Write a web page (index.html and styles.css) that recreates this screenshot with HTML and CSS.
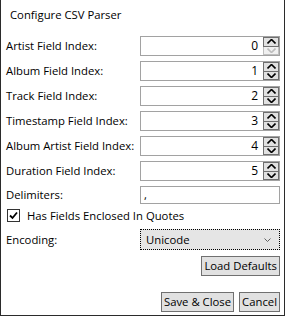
FILE: index.html
```html
<!DOCTYPE html>
<html>
<head>
<meta charset="utf-8">
<link rel="stylesheet" href="styles.css">
</head>
<body>
<div class="window">
  <div class="title">Configure CSV Parser</div>
  <div class="form">
    <div class="row"><span class="label">Artist Field Index:</span>
      <div class="spin"><span class="val">0</span>
        <div class="spinbtns">
          <span class="sb"><svg width="9" height="5" viewBox="0 0 9 5"><path d="M0.5 4.5 L4.5 0.5 L8.5 4.5" fill="none" stroke="#000" stroke-width="1.6"/></svg></span>
          <span class="sb disabled"><svg width="9" height="5" viewBox="0 0 9 5"><path d="M0.5 0.5 L4.5 4.5 L8.5 0.5" fill="none" stroke="#bdbdbd" stroke-width="1.6"/></svg></span>
        </div>
      </div>
    </div>
    <div class="row"><span class="label">Album Field Index:</span>
      <div class="spin"><span class="val">1</span>
        <div class="spinbtns">
          <span class="sb"><svg width="9" height="5" viewBox="0 0 9 5"><path d="M0.5 4.5 L4.5 0.5 L8.5 4.5" fill="none" stroke="#000" stroke-width="1.6"/></svg></span>
          <span class="sb"><svg width="9" height="5" viewBox="0 0 9 5"><path d="M0.5 0.5 L4.5 4.5 L8.5 0.5" fill="none" stroke="#000" stroke-width="1.6"/></svg></span>
        </div>
      </div>
    </div>
    <div class="row"><span class="label">Track Field Index:</span>
      <div class="spin"><span class="val">2</span>
        <div class="spinbtns">
          <span class="sb"><svg width="9" height="5" viewBox="0 0 9 5"><path d="M0.5 4.5 L4.5 0.5 L8.5 4.5" fill="none" stroke="#000" stroke-width="1.6"/></svg></span>
          <span class="sb"><svg width="9" height="5" viewBox="0 0 9 5"><path d="M0.5 0.5 L4.5 4.5 L8.5 0.5" fill="none" stroke="#000" stroke-width="1.6"/></svg></span>
        </div>
      </div>
    </div>
    <div class="row"><span class="label">Timestamp Field Index:</span>
      <div class="spin"><span class="val">3</span>
        <div class="spinbtns">
          <span class="sb"><svg width="9" height="5" viewBox="0 0 9 5"><path d="M0.5 4.5 L4.5 0.5 L8.5 4.5" fill="none" stroke="#000" stroke-width="1.6"/></svg></span>
          <span class="sb"><svg width="9" height="5" viewBox="0 0 9 5"><path d="M0.5 0.5 L4.5 4.5 L8.5 0.5" fill="none" stroke="#000" stroke-width="1.6"/></svg></span>
        </div>
      </div>
    </div>
    <div class="row"><span class="label">Album Artist Field Index:</span>
      <div class="spin"><span class="val">4</span>
        <div class="spinbtns">
          <span class="sb"><svg width="9" height="5" viewBox="0 0 9 5"><path d="M0.5 4.5 L4.5 0.5 L8.5 4.5" fill="none" stroke="#000" stroke-width="1.6"/></svg></span>
          <span class="sb"><svg width="9" height="5" viewBox="0 0 9 5"><path d="M0.5 0.5 L4.5 4.5 L8.5 0.5" fill="none" stroke="#000" stroke-width="1.6"/></svg></span>
        </div>
      </div>
    </div>
    <div class="row"><span class="label">Duration Field Index:</span>
      <div class="spin"><span class="val">5</span>
        <div class="spinbtns">
          <span class="sb"><svg width="9" height="5" viewBox="0 0 9 5"><path d="M0.5 4.5 L4.5 0.5 L8.5 4.5" fill="none" stroke="#000" stroke-width="1.6"/></svg></span>
          <span class="sb"><svg width="9" height="5" viewBox="0 0 9 5"><path d="M0.5 0.5 L4.5 4.5 L8.5 0.5" fill="none" stroke="#000" stroke-width="1.6"/></svg></span>
        </div>
      </div>
    </div>
    <div class="row delim"><span class="label">Delimiters:</span>
      <div class="textbox">,</div>
    </div>
    <div class="check-row">
      <span class="checkbox"><svg width="11" height="11" viewBox="0 0 11 11"><path d="M2 5.5 L4.5 8 L9 2.5" fill="none" stroke="#000" stroke-width="1.8"/></svg></span>
      <span class="check-label">Has Fields Enclosed In Quotes</span>
    </div>
    <div class="row enc"><span class="label">Encoding:</span>
      <div class="combo"><span>Unicode</span><svg width="7" height="4" viewBox="0 0 7 4"><path d="M0.5 0.5 L3.5 3.5 L6.5 0.5" fill="none" stroke="#606060" stroke-width="1"/></svg></div>
    </div>
    <div class="actions load"><button class="btn">Load Defaults</button></div>
    <div class="actions final"><button class="btn">Save &amp; Close</button><button class="btn">Cancel</button></div>
  </div>
</div>
</body>
</html>
```
FILE: styles.css
```css
* { box-sizing: border-box; }
html, body { margin: 0; padding: 0; background: #fff; }
body {
  font-family: "Open Sans", "Noto Sans", sans-serif;
  font-size: 11.3px;
  color: #000;
}
.window {
  width: 285px;
  height: 316px;
  border: 1px solid #2b2b2b;
  border-top: none;
  background: #fff;
}
.title {
  height: 36px;
  padding: 7px 0 0 9px;
  line-height: 16px;
}
.form {
  display: flex;
  flex-direction: column;
  padding: 0 4px 0 5px;
}
.row {
  display: flex;
  align-items: center;
  justify-content: space-between;
  height: 20px;
  margin-bottom: 5px;
}
.label { line-height: 16px; white-space: nowrap; }
.spin {
  width: 140px;
  height: 20px;
  border: 1px solid #a2a2a2;
  display: flex;
  align-items: stretch;
  justify-content: flex-end;
}
.val {
  line-height: 18px;
  font-size: 12px;
  padding-right: 5px;
}
.spinbtns {
  width: 16px;
  display: flex;
  flex-direction: column;
}
.sb {
  flex: 1;
  border: 1px solid #6f6f6f;
  background: #e1e1e1;
  display: flex;
  align-items: center;
  justify-content: center;
}
.sb + .sb { border-top: none; }
.sb.disabled { border-color: #bfbfbf; background: #f0f0f0; }
.delim { height: 18px; }
.textbox {
  width: 140px;
  height: 18px;
  border: 1px solid #a2a2a2;
  padding-left: 3px;
  line-height: 16px;
}
.check-row {
  display: flex;
  align-items: center;
  height: 13px;
  margin: 0 0 7px 1px;
}
.checkbox {
  width: 13px;
  height: 13px;
  border: 1px solid #333;
  display: flex;
  align-items: center;
  justify-content: center;
  margin-right: 7px;
}
.check-label { line-height: 16px; }
.enc { height: 21px; margin-bottom: 6px; }
.combo {
  width: 140px;
  height: 21px;
  border: 1px dotted #000;
  background: #e5e5e5;
  display: flex;
  align-items: center;
  justify-content: space-between;
  padding: 0 8px 0 5px;
}
.actions {
  display: flex;
  justify-content: flex-end;
  gap: 5px;
}
.load { margin-bottom: 16px; }
.btn {
  font: inherit;
  color: #000;
  height: 20px;
  padding: 0 2px;
  background: #e1e1e1;
  border: 1px solid #707070;
  border-radius: 0;
  line-height: 16px;
}
```
